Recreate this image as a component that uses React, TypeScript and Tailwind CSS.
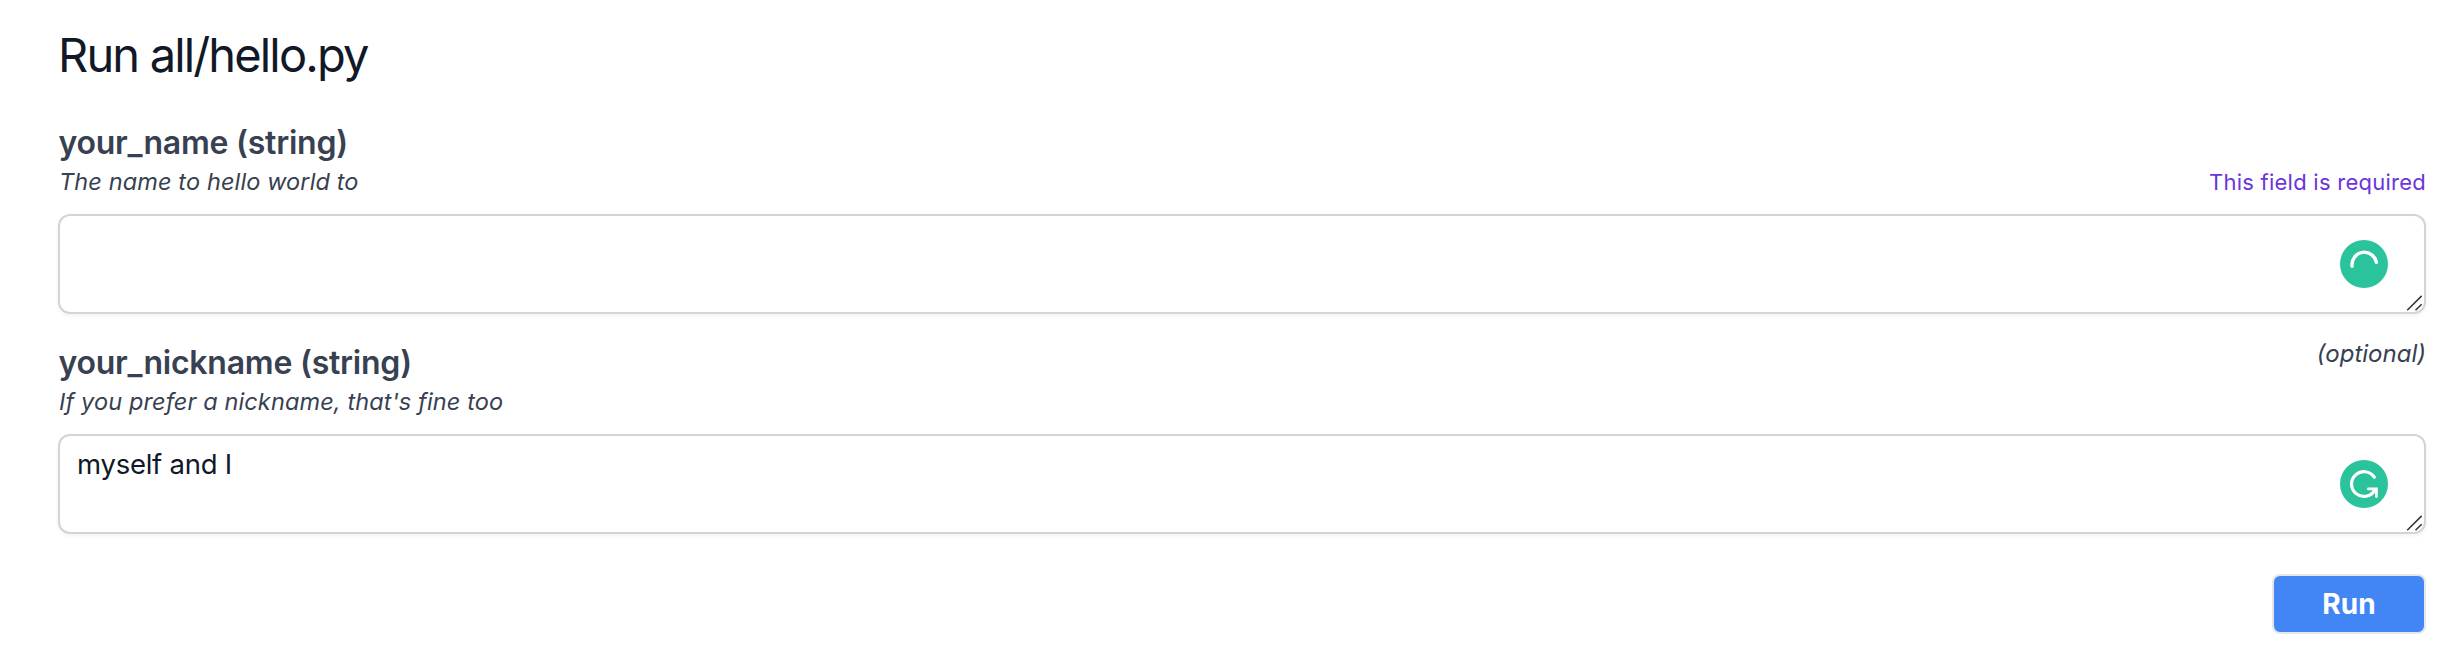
import React from "react";

function ResizeGrip() {
  return (
    <svg className="absolute right-[2px] bottom-[1px] h-4 w-4" viewBox="0 0 16 16" fill="none" stroke="#333" strokeWidth="1.5">
      <path d="M1.2 15.3L15.7 0.9M9.5 15.3L15.7 9.2" />
    </svg>
  );
}

function Badge({ loading }: { loading: boolean }) {
  return (
    <svg className="absolute top-6 right-9 h-12 w-12" viewBox="0 0 48 48" fill="none" stroke="#fff">
      <circle cx="24" cy="24" r="24" fill="#2ac39c" stroke="none" />
      {loading ? (
        <path d="M12.1 26.2A12.3 12.3 0 0 1 36.4 22.4" strokeWidth="3.4" strokeLinecap="round" />
      ) : (
        <>
          <path d="M34.3 17.2A12.4 12.4 0 1 0 34.6 30.4" strokeWidth="3.2" strokeLinecap="round" />
          <path d="M28.4 28.9H36.4V36.6" strokeWidth="2.8" strokeLinecap="round" />
        </>
      )}
    </svg>
  );
}

type FieldProps = {
  name: string;
  description: string;
  value: string;
  required?: boolean;
};

function Field({ name, description, value, required = false }: FieldProps) {
  return (
    <section>
      <div className="mb-[16px] flex h-[78px] justify-between">
        <div className="pl-[0.5px]">
          <h2 className="text-[32px] leading-[46px] font-semibold tracking-[-0.23px] text-[#374151]">{name} (string)</h2>
          <p className="pl-[0.5px] text-[23.5px] leading-8 tracking-[0.12px] text-[#374151] italic">{description}</p>
        </div>
        {required ? (
          <span className="self-end text-[22px] leading-8 tracking-[0.25px] text-[#6d35d9]">This field is required</span>
        ) : (
          <span className="-mt-0.5 self-start text-2xl leading-8 text-[#374151] italic">(optional)</span>
        )}
      </div>
      <div className="relative h-[100px] rounded-xl border-2 border-[#d1d5db] bg-white px-[17px] py-2 text-[27.5px] leading-10 tracking-[-0.25px] text-[#111827] shadow-[0_2px_4px_rgba(0,0,0,0.05)]">
        {value}
        <Badge loading={required} />
        <ResizeGrip />
      </div>
    </section>
  );
}

export default function App() {
  return (
    <main className="h-[652px] bg-white pt-[27px] pr-[26px] pl-[58px] font-['Inter',sans-serif]">
      <h1 className="mb-[37px] text-[47px] leading-[56px] tracking-[-1.85px] text-[#111827]">Run all/hello.py</h1>
      <div className="flex flex-col gap-[26px]">
        <Field name="your_name" description="The name to hello world to" value="" required />
        <Field name="your_nickname" description="If you prefer a nickname, that's fine too" value="myself and I" />
      </div>
      <div className="mt-10 flex justify-end">
        <button className="h-[60px] w-[154px] rounded-lg border-2 border-[#e5e7eb] bg-[#4285f4] text-[28px] leading-10 font-bold text-white">Run</button>
      </div>
    </main>
  );
}
